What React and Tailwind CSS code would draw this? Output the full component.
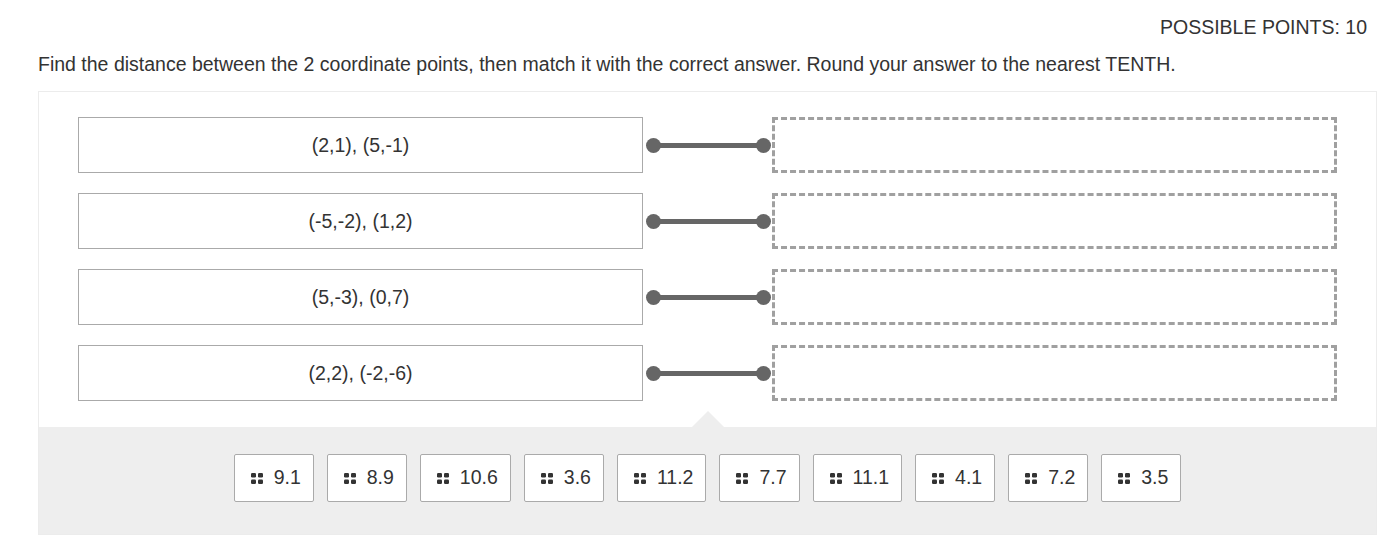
import React from "react";

const rows = ["(2,1), (5,-1)", "(-5,-2), (1,2)", "(5,-3), (0,7)", "(2,2), (-2,-6)"];
const chips = ["9.1", "8.9", "10.6", "3.6", "11.2", "7.7", "11.1", "4.1", "7.2", "3.5"];

function Dots() {
  return (
    <svg width="12" height="11" viewBox="0 0 12 11" className="shrink-0">
      <rect x="0" y="0" width="5" height="4.5" rx="1.2" fill="#333" />
      <rect x="7" y="0" width="5" height="4.5" rx="1.2" fill="#333" />
      <rect x="0" y="6.5" width="5" height="4.5" rx="1.2" fill="#333" />
      <rect x="7" y="6.5" width="5" height="4.5" rx="1.2" fill="#333" />
    </svg>
  );
}

export default function App() {
  return (
    <div className="w-[1395px] h-[545px] bg-white text-[#333] overflow-hidden" style={{ fontFamily: '"Liberation Sans", Arial, sans-serif' }}>
      <div className="pl-[38px] pr-[18px]">
        <div className="flex justify-end pt-[16px] pr-[10px] text-[19.5px] leading-[22px]">POSSIBLE POINTS: 10</div>
        <div className="mt-[15px] text-[19.5px] leading-[22px]">
          Find the distance between the 2 coordinate points, then match it with the correct answer. Round your answer to the nearest TENTH.
        </div>
        <div className="mt-[16px] border border-[#ececec] h-[444px] flex flex-col">
          <div className="flex-1 px-[39px] pt-[25px] flex flex-col gap-[20px]">
            {rows.map((r) => (
              <div key={r} className="grid grid-cols-[1fr_129px_1fr] h-[56px]">
                <div className="border border-[#aaaaaa] flex items-center justify-center text-[19.5px] pt-[1px]">{r}</div>
                <div className="flex items-center pl-[3px] pr-[1px]">
                  <div className="w-[15px] h-[15px] rounded-full bg-[#666] shrink-0" />
                  <div className="flex-1 h-[5px] bg-[#666] -mx-[2px]" />
                  <div className="w-[15px] h-[15px] rounded-full bg-[#666] shrink-0" />
                </div>
                <div className="border-[3px] border-dashed border-[#a0a0a0]" />
              </div>
            ))}
          </div>
          <div className="relative h-[107px] bg-[#eeeeee] flex justify-center pt-[27px] gap-[13px]">
            <div className="absolute left-[653px] -top-[16px] w-0 h-0 border-l-[16px] border-r-[16px] border-b-[16px] border-l-transparent border-r-transparent border-b-[#eeeeee]" />
            {chips.map((c) => (
              <div key={c} className="h-[48px] bg-white border border-[#aaaaaa] rounded-[2px] flex items-center gap-[11px] pl-[16px] pr-[12px] text-[19.5px]">
                <Dots />
                <span>{c}</span>
              </div>
            ))}
          </div>
        </div>
      </div>
    </div>
  );
}
